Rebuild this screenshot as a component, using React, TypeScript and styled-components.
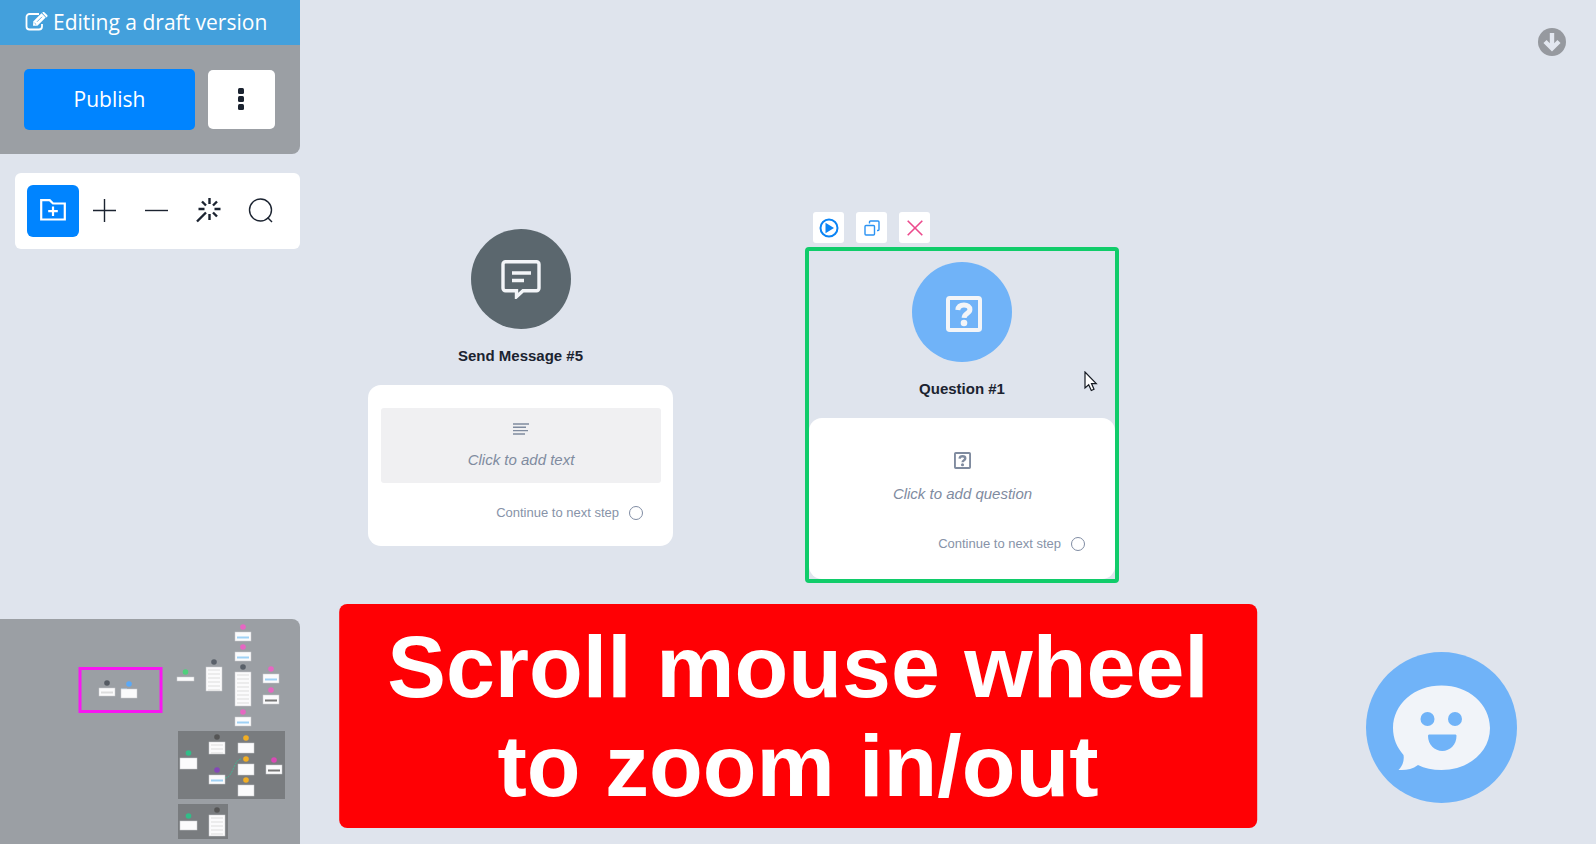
import React from "react";
import styled, { createGlobalStyle } from "styled-components";

const GlobalStyle = createGlobalStyle`
  *, *::before, *::after { box-sizing: border-box; }
  body {
    margin: 0;
    background: #dfe4ed;
    color: #1b2330;
    font-family: "Liberation Sans", Arial, sans-serif;
  }
  button { font: inherit; margin: 0; padding: 0; border: 0; cursor: pointer; }
  svg { display: block; flex: none; }
`;

const Page = styled.div`
  position: relative;
  display: flex;
  min-height: 100vh;
  overflow: hidden;
`;

const Sidebar = styled.aside`
  display: flex;
  flex-direction: column;
  flex: 0 0 300px;
`;

const DraftBar = styled.div`
  display: flex;
  align-items: center;
  gap: 5px;
  height: 45px;
  padding: 0 0 2px 25px;
  background: #43a0dc;
  color: #fff;
  font-family: "Open Sans", sans-serif;
  font-size: 21px;
  line-height: 28px;
  white-space: nowrap;
`;

const PublishPanel = styled.div`
  display: flex;
  align-items: center;
  gap: 13px;
  padding: 24px;
  background: #9b9fa4;
  border-radius: 0 0 8px 0;
`;

const PublishButton = styled.button`
  flex: 0 0 171px;
  height: 61px;
  padding-bottom: 2px;
  border-radius: 5px;
  background: #0084ff;
  color: #fff;
  font-family: "Open Sans", sans-serif;
  font-size: 21px;
`;

const MoreButton = styled.button`
  display: grid;
  place-items: center;
  width: 67px;
  height: 59px;
  padding: 0 2px 2px 0;
  border-radius: 5px;
  background: #fff;
`;

const Toolbar = styled.div`
  display: flex;
  margin: 19px 0 0 15px;
  padding: 12px;
  background: #fff;
  border-radius: 6px;
`;

const ToolButton = styled.button<{ $active?: boolean }>`
  display: grid;
  place-items: center;
  width: 52px;
  height: 52px;
  padding: 0 1px 2px 0;
  border-radius: 6px;
  background: ${(p) => (p.$active ? "#0084ff" : "transparent")};
  color: ${(p) => (p.$active ? "#fff" : "#1b2330")};
`;

const Minimap = styled.div`
  margin-top: auto;
  height: 225px;
  background: #9b9fa4;
  border-radius: 0 8px 0 0;
  overflow: hidden;
`;

const Canvas = styled.main`
  position: relative;
  flex: 1;
`;

const Node = styled.section<{ $x: number; $y: number; $selected?: boolean }>`
  position: absolute;
  left: ${(p) => p.$x}px;
  top: ${(p) => p.$y}px;
  display: flex;
  flex-direction: column;
  align-items: center;
  width: ${(p) => (p.$selected ? 314 : 305)}px;
  padding-top: ${(p) => (p.$selected ? 11 : 0)}px;
  border: ${(p) => (p.$selected ? "4px solid #10cc6a" : "0")};
  border-radius: 4px;
`;

const NodeIcon = styled.div<{ $color: string }>`
  display: grid;
  place-items: center;
  width: 100px;
  height: 100px;
  border-radius: 50%;
  background: ${(p) => p.$color};
  color: #f3f5f8;
`;

const NodeTitle = styled.h2`
  margin: 17px 0 19px;
  font-size: 15px;
  line-height: 20px;
  font-weight: 700;
`;

const NodeCard = styled.div`
  display: flex;
  flex-direction: column;
  width: 100%;
  height: 161px;
  padding: 23px 12px 0 13px;
  background: #fff;
  border-radius: 13px;
`;

const Prompt = styled.button<{ $filled?: boolean }>`
  display: flex;
  flex-direction: column;
  align-items: center;
  gap: 15px;
  height: ${(p) => (p.$filled ? 75 : 84)}px;
  padding-top: ${(p) => (p.$filled ? 15 : 11)}px;
  border-radius: 3px;
  background: ${(p) => (p.$filled ? "#f0f0f2" : "transparent")};
  color: #7f8b9f;
  font-size: 15px;
  line-height: 20px;
  font-style: italic;
`;

const NextStep = styled.div<{ $gap: number }>`
  display: flex;
  align-items: center;
  justify-content: flex-end;
  gap: 10px;
  margin-top: ${(p) => p.$gap}px;
  padding-right: 18px;
  color: #8793a8;
  font-size: 13px;
  line-height: 20px;
  font-weight: 500;
`;

const Port = styled.span`
  width: 14px;
  height: 14px;
  border: 1px solid #7f8ca3;
  border-radius: 50%;
`;

const NodeActions = styled.div`
  position: absolute;
  left: 4px;
  top: -39px;
  display: flex;
  align-items: center;
  gap: 12px;
`;

const ActionButton = styled.button<{ $color: string }>`
  display: grid;
  place-items: center;
  width: 31px;
  height: 31px;
  border-radius: 3px;
  background: #fff;
  color: ${(p) => p.$color};
`;

const DownButton = styled.button`
  position: absolute;
  top: 28px;
  right: 30px;
  background: none;
`;

const ChatButton = styled.button`
  position: absolute;
  right: 79px;
  bottom: 41px;
  border-radius: 50%;
  background: none;
`;

const Pointer = styled.svg`
  position: absolute;
  left: 784px;
  top: 371px;
`;

const Banner = styled.div`
  position: absolute;
  left: 50%;
  bottom: 16px;
  transform: translateX(-50%);
  padding: 13px 48px;
  border-radius: 8px;
  background: #ff0004;
  color: #fff;
  font-size: 88px;
  line-height: 99px;
  font-weight: 700;
  text-align: center;
  white-space: nowrap;
`;

function EditIcon() {
  return (
    <svg width="23" height="19" viewBox="0 0 23 19" fill="none">
      <path d="M14 2H4.5A3 3 0 0 0 1.500 5v9.500a3 3 0 0 0 3 3H14a3 3 0 0 0 3-3V12" stroke="#fff" strokeWidth="1.800" />
      <path d="m8 13.800.4-4.600L16.500 1.200l4.200 4.200-8.300 8.300z" fill="#fff" />
      <path d="m17.200.7.6-.5c.5-.4 1-.4 1.500 0l2.900 2.800c.5.500.5 1.200 0 1.700l-.7.700z" fill="#fff" />
      <path d="m9.500 11 1.700 1.600M12 9.800l5-5" stroke="#43a0dc" strokeWidth=".8" />
    </svg>
  );
}

function QuestionIcon({ size }: { size: number }) {
  return (
    <svg width={size} height={size} viewBox="0 0 36 36" fill="none" stroke="currentColor">
      <rect x="2" y="2" width="32" height="32" rx="1.800" strokeWidth="4" />
      <path d="M11.800 14c.4-3.300 2.600-5 6.200-5 3.500 0 5.900 1.800 5.900 4.500 0 4.200-5.600 3.500-5.800 8.300" strokeWidth="5" />
      <circle cx="18" cy="27" r="3.300" fill="currentColor" stroke="none" />
    </svg>
  );
}

type MiniNode = [x: number, y: number, w: number, h: number, color: string, accent?: string];

// Thumbnail cards: top-left corner, size, badge colour and accent line.
const miniNodes: MiniNode[] = [
  [99, 78, 16, 8, "#555b63", "#ddd"],
  [121, 79, 16, 9, "#5aa9f7"],
  [177, 67, 17, 4, "#4fd07c"],
  [206, 57, 16, 24, "#596069", "#ddd"],
  [235, 22, 16, 9, "#e667c2", "#9fd1f5"],
  [235, 42, 16, 9, "#e667c2", "#9fd1f5"],
  [235, 62, 16, 34, "#596069", "#ddd"],
  [235, 107, 16, 9, "#e667c2", "#9fd1f5"],
  [263, 64, 16, 9, "#e667c2", "#9fd1f5"],
  [263, 85, 16, 9, "#e667c2", "#777"],
  [180, 148, 17, 11, "#31bd88"],
  [209, 132, 16, 12, "#555", "#ddd"],
  [209, 165, 16, 9, "#8447b8", "#9fd1f5"],
  [238, 133, 16, 10, "#f2ae24"],
  [238, 154, 16, 11, "#f2ae24"],
  [238, 175, 16, 11, "#f2ae24"],
  [266, 155, 16, 9, "#d94ab5", "#777"],
  [180, 211, 17, 9, "#31bd88"],
  [209, 205, 16, 21, "#555", "#ddd"],
];

function MinimapDrawing() {
  return (
    <svg width="300" height="225" viewBox="0 9 300 225">
      <rect x="178" y="121" width="107" height="68" fill="#797c7f" />
      <rect x="178" y="194" width="50" height="35" fill="#797c7f" />
      <path d="M225 168c8 0 9-19 16-19" fill="none" stroke="#44b493" strokeDasharray="2 1" />
      <path d="M121 79.500h6" stroke="#a8d0f5" strokeWidth="2" />
      {miniNodes.map(([x, y, w, h, color, accent]) => (
        <g key={`${x}-${y}`}>
          <circle cx={x + w / 2} cy={y - 5} r="2.800" fill={color} />
          <rect x={x} y={y} width={w} height={h} fill="#fbfbfc" stroke="#c9cbce" strokeWidth=".5" />
          {accent && h < 10 && <path d={`M${x + 2} ${y + h - 3.5}h${w - 4}`} stroke={accent} strokeWidth="2" />}
          {accent && h >= 10 &&
            Array.from({ length: Math.floor(h / 4) }, (_, i) => (
              <path key={i} d={`M${x + 2} ${y + 3 + i * 4}h${w - 4}`} stroke={accent} strokeWidth="1" />
            ))}
        </g>
      ))}
      <rect x="80" y="58.500" width="81" height="43" fill="none" stroke="#f916f2" strokeWidth="3" />
    </svg>
  );
}

export default function App() {
  return (
    <Page>
      <GlobalStyle />
      <Sidebar>
        <DraftBar>
          <EditIcon />
          Editing a draft version
        </DraftBar>
        <PublishPanel>
          <PublishButton>Publish</PublishButton>
          <MoreButton aria-label="More options">
            <svg width="6" height="22" fill="#1b2330">
              <rect width="6" height="6" rx="1.500" />
              <rect y="8" width="6" height="6" rx="1.500" />
              <rect y="16" width="6" height="6" rx="1.500" />
            </svg>
          </MoreButton>
        </PublishPanel>
        <Toolbar>
          <ToolButton $active aria-label="Add folder">
            <svg width="26" height="22" viewBox="0 0 26 22" fill="none" stroke="currentColor" strokeWidth="2.200">
              <path d="M1.200 20.500V1.200h8.500L13 4.500h11.800v16z" />
              <path d="M13 7.500v9.500M8.200 12.200h9.600" />
            </svg>
          </ToolButton>
          <ToolButton aria-label="Zoom in">
            <svg width="23" height="23" fill="none" stroke="currentColor" strokeWidth="1.400">
              <path d="M11.500 0v23M0 11.500h23" />
            </svg>
          </ToolButton>
          <ToolButton aria-label="Zoom out">
            <svg width="23" height="23" fill="none" stroke="currentColor" strokeWidth="1.400">
              <path d="M0 11.500h23" />
            </svg>
          </ToolButton>
          <ToolButton aria-label="Arrange">
            <svg width="26" height="26" viewBox="0 0 26 26" fill="none" stroke="currentColor" strokeWidth="2.400">
              <path d="M13.500 1v6M13.500 17v6M2.500 12h6M18.500 12h6M6 4.500l4 4M21 4.500l-4 4M21 19.500l-4-4M1 24.500l9-9" />
            </svg>
          </ToolButton>
          <ToolButton aria-label="Search">
            <svg width="25" height="25" viewBox="0 0 25 25" fill="none" stroke="currentColor" strokeWidth="1.400">
              <circle cx="12.500" cy="12" r="11" />
              <path d="m19.500 19.500 4.500 4.500" />
            </svg>
          </ToolButton>
        </Toolbar>
        <Minimap>
          <MinimapDrawing />
        </Minimap>
      </Sidebar>

      <Canvas>
        <Node $x={68} $y={229}>
          <NodeIcon $color="#5b676e">
            <svg width="40" height="40" viewBox="0 0 40 40" fill="none" stroke="currentColor" strokeWidth="3.400">
              <path d="M4.500 2.700h31a2.500 2.500 0 0 1 2.500 2.500v24a2.500 2.500 0 0 1-2.500 2.500H22l-6.500 6v-6h-11A2.500 2.500 0 0 1 2 29.200v-24a2.500 2.500 0 0 1 2.500-2.500z" />
              <path d="M11 14h19M11 21.500h12" />
            </svg>
          </NodeIcon>
          <NodeTitle>Send Message #5</NodeTitle>
          <NodeCard>
            <Prompt $filled>
              <svg width="16" height="12" stroke="currentColor" strokeWidth="1.400">
                <path d="M0 1h16M0 4.300h13M0 7.600h15M0 11h12" />
              </svg>
              Click to add text
            </Prompt>
            <NextStep $gap={20}>
              Continue to next step
              <Port />
            </NextStep>
          </NodeCard>
        </Node>

        <Node $x={505} $y={247} $selected>
          <NodeActions>
            <ActionButton $color="#0a84f5" aria-label="Start from here">
              <svg width="20" height="20" viewBox="0 0 20 20">
                <circle cx="10" cy="10" r="8.500" fill="none" stroke="currentColor" strokeWidth="2" />
                <path d="m6.500 4.800 8.500 5.200-8.500 5.200z" fill="currentColor" />
              </svg>
            </ActionButton>
            <ActionButton $color="#2b93f3" aria-label="Duplicate">
              <svg width="16" height="16" viewBox="0 0 16 16" fill="none" stroke="currentColor" strokeWidth="1.400">
                <rect x="1" y="5.500" width="9.500" height="9.500" rx="1" />
                <path d="M5.500 3.500V2a1 1 0 0 1 1-1H14a1 1 0 0 1 1 1v7.500a1 1 0 0 1-1 1h-1" />
              </svg>
            </ActionButton>
            <ActionButton $color="#ec4a8c" aria-label="Delete">
              <svg width="16" height="16" viewBox="0 0 16 16" fill="none" stroke="currentColor" strokeWidth="1.600">
                <path d="m.7.7 14.600 14.600M15.300.7.7 15.300" />
              </svg>
            </ActionButton>
          </NodeActions>
          <NodeIcon $color="#70b3f8">
            <svg width="40" height="40" viewBox="-4 -4 40 40">
              <QuestionIcon size={36} />
            </svg>
          </NodeIcon>
          <NodeTitle>Question #1</NodeTitle>
          <NodeCard>
            <Prompt>
              <QuestionIcon size={17} />
              Click to add question
            </Prompt>
            <NextStep $gap={9}>
              Continue to next step
              <Port />
            </NextStep>
          </NodeCard>
        </Node>

        <Pointer width="14" height="21" viewBox="0 0 14 21">
          <path d="M1 1v16l3.700-3.300 2.600 5.800 2.700-1.200-2.500-5.700h4.800z" fill="#fff" stroke="#151a22" strokeWidth="1.200" />
        </Pointer>

        <DownButton aria-label="Scroll down">
          <svg width="28" height="28" viewBox="0 0 28 28">
            <circle cx="14" cy="14" r="14" fill="#96999f" />
            <path d="M14 5v15M7 13.500l7 7 7-7" fill="none" stroke="#e3e7f0" strokeWidth="4.400" />
          </svg>
        </DownButton>

        <ChatButton aria-label="Open chat">
          <svg width="151" height="151" viewBox="0 0 151 151">
            <circle cx="75.500" cy="75.500" r="75.500" fill="#70b3f8" />
            <path d="M75.500 33.500c27 0 48.500 18.500 48.500 42.500s-21.500 42-48.500 42c-9 0-17-1.800-23.500-5-6 4.500-12.500 5.500-19.500 5 4-4 6-9.500 5-15-6.500-7.500-10.500-16.500-10.500-27 0-24 21.500-42.500 48.500-42.500z" fill="#f1f4f9" />
            <circle cx="61.500" cy="67" r="7" fill="#70b3f8" />
            <circle cx="89" cy="67" r="7" fill="#70b3f8" />
            <path d="M63.500 82.500h25.500c1 0 1.500.5 1.500 1.500 0 8.500-6.500 15-14.200 15S62 92.500 62 84c0-1 .5-1.500 1.500-1.500z" fill="#70b3f8" />
          </svg>
        </ChatButton>
      </Canvas>

      <Banner>
        Scroll mouse wheel
        <br />
        to zoom in/out
      </Banner>
    </Page>
  );
}
